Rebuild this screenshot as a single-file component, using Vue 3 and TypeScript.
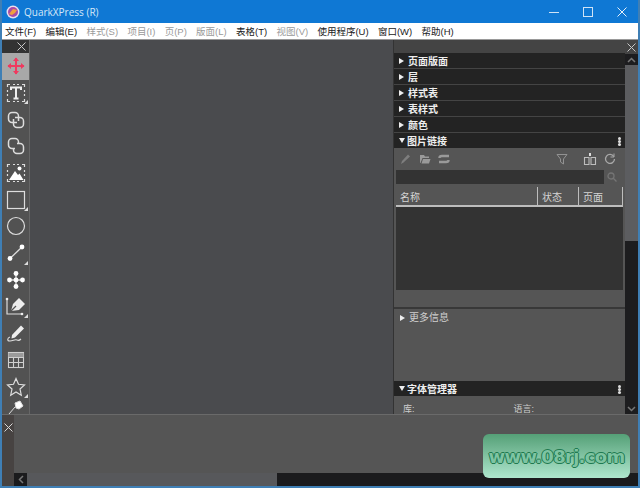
<script setup lang="ts">
const menus = [
  { t: '文件(F)', on: true }, { t: '编辑(E)', on: true }, { t: '样式(S)', on: false }, { t: '项目(I)', on: false },
  { t: '页(P)', on: false }, { t: '版面(L)', on: false }, { t: '表格(T)', on: true }, { t: '视图(V)', on: false },
  { t: '使用程序(U)', on: true }, { t: '窗口(W)', on: true }, { t: '帮助(H)', on: true },
]
const rows = ['页面版面', '层', '样式表', '表样式', '颜色']
</script>

<template>
  <div class="win">
    <header class="title">
      <svg class="logo" width="14" height="14" viewBox="0 0 14 14">
        <circle cx="7" cy="7" r="6.500" fill="#e8e0ee" />
        <circle cx="7" cy="7" r="5" fill="#a84aa8" />
        <path d="M3 9l4-5 4 1-2 3-3 2z" fill="#f0a040" />
      </svg>
      <span class="title-text">QuarkXPress (R)</span>
      <div class="caption">
        <svg width="10" height="10" viewBox="0 0 10 10"><path d="M0 5.500h10" stroke="#cfe3f6" /></svg>
        <svg width="10" height="10" viewBox="0 0 10 10"><rect x=".5" y=".5" width="9" height="9" fill="none" stroke="#cfe3f6" /></svg>
        <svg width="10" height="10" viewBox="0 0 10 10"><path d="M.5.5l9 9M9.500.5l-9 9" stroke="#e4f0fa" /></svg>
      </div>
    </header>
    <nav class="menu">
      <span v-for="m in menus" :key="m.t" :class="{ off: !m.on }">{{ m.t }}</span>
    </nav>

    <div class="main">
      <aside class="tools">
        <div class="tools-head">
          <svg width="9" height="9" viewBox="0 0 9 9"><path d="M.5.5l8 8M8.500.5l-8 8" stroke="#c8c8c8" /></svg>
        </div>
        <div class="tool active">
          <svg width="20" height="20" viewBox="0 0 20 20" fill="none" stroke="#f0395f" stroke-width="2">
            <path d="M10 2v16M2 10h16" />
            <path d="M7 5l3-3.500L13 5zM7 15l3 3.500 3-3.500zM5 7l-3.500 3L5 13zM15 7l3.500 3-3.500 3z" fill="#f0395f" stroke="none" />
          </svg>
        </div>
        <div class="tool">
          <svg width="20" height="20" viewBox="0 0 20 20" fill="none" stroke="#ddd" stroke-width="1.200">
            <path d="M1.500 4V1.500H4M7 1.500h2M11 1.500h2M16 1.500h2.500V4M18.500 7v2M18.500 11v2M18.500 16v2.500H16M13 18.500h-2M9 18.500H7M4 18.500H1.500V16M1.500 13v-2M1.500 9V7" />
            <path d="M5 7V4.500h10V7M10 4.500v11M7.500 15.500h5" stroke="#eee" stroke-width="2" />
          </svg>
          <i class="corner" />
        </div>
        <div class="tool">
          <svg width="20" height="20" viewBox="0 0 20 20" fill="none" stroke="#ddd" stroke-width="1.500">
            <path d="M11 12.500H6A3.500 3.500 0 0 1 2.500 9V6A3.500 3.500 0 0 1 6 2.500h3A3.500 3.500 0 0 1 12.500 6v5" />
            <path d="M9 7.500h5A3.500 3.500 0 0 1 17.500 11v3a3.500 3.500 0 0 1-3.500 3.500h-3A3.500 3.500 0 0 1 7.500 14V9" />
          </svg>
        </div>
        <div class="tool">
          <svg width="20" height="20" viewBox="0 0 20 20" fill="none" stroke="#ddd" stroke-width="1.500">
            <path d="M9 12.500H6A3.500 3.500 0 0 1 2.500 9V6A3.500 3.500 0 0 1 6 2.500h3A3.500 3.500 0 0 1 12.500 6v1" />
            <path d="M11 7.500h3A3.500 3.500 0 0 1 17.500 11v3a3.500 3.500 0 0 1-3.500 3.500h-3A3.500 3.500 0 0 1 7.500 14v-1" />
          </svg>
        </div>
        <div class="tool">
          <svg width="20" height="20" viewBox="0 0 20 20" fill="none" stroke="#ddd" stroke-width="1.200">
            <path d="M1.500 4V1.500H4M7 1.500h2M11 1.500h2M16 1.500h2.500V4M18.500 7v2M18.500 11v2M18.500 16v2.500H16M13 18.500h-2M9 18.500H7M4 18.500H1.500V16M1.500 13v-2M1.500 9V7" />
            <circle cx="13.500" cy="5.500" r="2" fill="#fff" stroke="none" />
            <path d="M3 17l6-9 3 4 1.500-1.500L17.500 17z" fill="#fff" stroke="none" />
          </svg>
        </div>
        <div class="tool">
          <svg width="20" height="20" viewBox="0 0 20 20"><rect x="1.500" y="1.500" width="17" height="17" fill="none" stroke="#ddd" stroke-width="1.200" /></svg>
          <i class="corner" />
        </div>
        <div class="tool">
          <svg width="20" height="20" viewBox="0 0 20 20"><circle cx="10" cy="10" r="8.500" fill="none" stroke="#ddd" stroke-width="1.200" /></svg>
        </div>
        <div class="tool">
          <svg width="20" height="20" viewBox="0 0 20 20">
            <path d="M4 15.500L16 4" stroke="#ddd" stroke-width="1.300" />
            <circle cx="4" cy="15.500" r="2.400" fill="#fff" /><circle cx="16" cy="4" r="2.400" fill="#fff" />
          </svg>
          <i class="corner" />
        </div>
        <div class="tool">
          <svg width="20" height="20" viewBox="0 0 20 20" fill="#fff">
            <path d="M3 10h14M10 3v14" stroke="#ddd" stroke-width="1.300" />
            <circle cx="10" cy="3.500" r="2.400" /><circle cx="10" cy="16.500" r="2.400" />
            <circle cx="3.500" cy="10" r="2.400" /><circle cx="16.500" cy="10" r="2.400" /><circle cx="10" cy="10" r="2.400" />
          </svg>
        </div>
        <div class="tool">
          <svg width="22" height="22" viewBox="0 0 22 22" fill="none" stroke="#ddd" stroke-width="1.200">
            <path d="M2 3v15h15" />
            <circle cx="2" cy="3" r="1.300" fill="#eee" stroke="none" /><circle cx="17" cy="18" r="1.300" fill="#eee" stroke="none" />
            <path d="M6 15l2-7 6-6 6 6-6 6z" fill="#eee" stroke="none" />
            <path d="M6 15l5-5" stroke="#555" />
          </svg>
          <i class="corner" />
        </div>
        <div class="tool">
          <svg width="20" height="20" viewBox="0 0 20 20" fill="none" stroke="#ddd" stroke-width="1.100">
            <path d="M6 12L15 2.500l3 3L9 14.500l-3.500 1z" fill="#eee" stroke="none" />
            <path d="M4 14c-3 1-3 4 0 4s5-2 7-1 3 0 4-1" />
          </svg>
        </div>
        <div class="tool">
          <svg width="20" height="20" viewBox="0 0 20 20" fill="none" stroke="#cfcfcf" stroke-width="1.100">
            <rect x="2.500" y="2.500" width="15" height="15" />
            <path d="M2.500 3h15v4h-15z" fill="#9a9a9a" stroke="none" />
            <path d="M2.500 7.500h15M2.500 12.500h15M7.500 7.500v10M12.500 7.500v10" />
          </svg>
        </div>
        <div class="tool">
          <svg width="20" height="20" viewBox="0 0 20 20"><path d="M10 1.500l2.500 5.800 6 .6-4.500 4.100 1.300 6.200L10 15l-5.300 3.200L6 12 1.500 7.900l6-.6z" fill="none" stroke="#ddd" stroke-width="1.200" /></svg>
          <i class="corner" />
        </div>
        <div class="tool clip">
          <svg width="20" height="20" viewBox="0 0 20 20" fill="#fff">
            <path d="M9 3l5-2 3 5-4 3-3-1zM9 7L3 14" stroke="#ddd" />
          </svg>
        </div>
      </aside>

      <div class="canvas" />

      <section class="panel">
        <div class="panel-inner">
          <div class="panel-head" />
          <div v-for="r in rows" :key="r" class="row"><i class="tri" />{{ r }}</div>
          <div class="row open"><i class="tri down" />图片链接<b class="dots" /></div>

          <div class="links">
            <div class="icons">
              <svg width="12" height="12" viewBox="0 0 12 12"><path d="M1 11l1-3 6-6.500 2 2-6.500 6z" fill="#7e7e7e" /></svg>
              <svg width="12" height="12" viewBox="0 0 12 12"><path d="M1 2h4l1 1.500h4V5H3.500L1.500 10H1zM4 6h7.500L10 10.500H2.500z" fill="#9a9a9a" /></svg>
              <svg width="12" height="12" viewBox="0 0 12 12" fill="none" stroke="#9a9a9a" stroke-width="2.400"><path d="M11 3H4Q1.500 3 1.500 5M1 9h7Q10.500 9 10.500 7" /></svg>
              <span class="spacer" />
              <svg width="12" height="12" viewBox="0 0 12 12" fill="none" stroke="#929292"><path d="M1 1.500h10L7.500 6v5l-3-2V6z" /></svg>
              <svg class="gap" width="14" height="12" viewBox="0 0 14 12" fill="none" stroke="#bdbdbd" stroke-width="1.100"><path d="M1.500 4.500h4.500v7H1.500zM8 4.500h4.500v7H8z" /><path d="M7 0v3" stroke="#ddd" stroke-width="2" /></svg>
              <svg width="12" height="12" viewBox="0 0 12 12" fill="none" stroke="#a8a8a8" stroke-width="1.300"><path d="M9.800 3.500A4.500 4.500 0 1 0 10.500 6" /><path d="M10 .5v3.500H6.500" stroke-width="1" /></svg>
            </div>
            <div class="search">
              <div class="search-box" />
              <svg width="10" height="10" viewBox="0 0 10 10" fill="none" stroke="#757575" stroke-width="1.300"><circle cx="4" cy="4" r="3" /><path d="M6.300 6.300L9.500 9.500" /></svg>
            </div>
            <div class="thead">
              <span class="c1">名称</span><span class="c2">状态</span><span class="c3">页面</span>
            </div>
            <div class="tbody" />
            <div class="tfoot" />
            <div class="more"><i class="tri" />更多信息</div>
          </div>
          <div class="row open"><i class="tri down" />字体管理器<b class="dots" /></div>
          <div class="fonts"><span>库:</span><span>语言:</span></div>
        </div>
        <div class="vscroll">
          <div class="vhead">
            <svg width="9" height="9" viewBox="0 0 9 9"><path d="M.5.5l8 8M8.500.5l-8 8" stroke="#c8c8c8" /></svg>
          </div>
          <div class="arrow"><svg width="9" height="6" viewBox="0 0 9 6"><path d="M1 5l3.500-3.500L8 5" fill="none" stroke="#777" stroke-width="1.500" /></svg></div>
          <div class="thumb" />
          <div class="track" />
          <div class="arrow"><svg width="9" height="6" viewBox="0 0 9 6"><path d="M1 1l3.500 3.500L8 1" fill="none" stroke="#777" stroke-width="1.500" /></svg></div>
        </div>
      </section>
    </div>

    <footer class="bottom">
      <div class="bottom-side">
        <svg width="9" height="9" viewBox="0 0 9 9"><path d="M.5.5l8 8M8.500.5l-8 8" stroke="#d8d8d8" /></svg>
      </div>
      <div class="bottom-main">
        <div class="bottom-area" />
        <div class="hscroll">
          <div class="harrow"><svg width="6" height="9" viewBox="0 0 6 9"><path d="M5 1L1.500 4.500 5 8" fill="none" stroke="#777" stroke-width="1.500" /></svg></div>
          <div class="hthumb" />
        </div>
      </div>
    </footer>

    <div class="mark">www.08rj.com</div>
  </div>
</template>

<style>
html, body { margin: 0; background: #0f78d4; }
</style>

<style scoped>
.win {
  width: 640px; height: 488px; box-sizing: border-box; overflow: hidden; position: relative;
  border: 2px solid #3f7fb5; border-top: 0; display: flex; flex-direction: column;
  background: #4a4b4e; font-family: "Liberation Sans", "Noto Sans CJK SC", sans-serif;
}
.title {
  height: 23px; flex: none; margin: 0 -2px; background: #0f78d4; display: flex; align-items: center; padding-left: 6px;
}
.logo { margin-right: 4px; }
.title-text { color: #d5e7f7; font: 10px "Open Sans", "Liberation Sans", sans-serif; }
.caption { margin-left: auto; display: flex; gap: 24px; padding-right: 13px; }
.menu {
  height: 16px; flex: none; background: #fff; display: flex; align-items: center; gap: 9.300px;
  padding-left: 3px; font-size: 9.500px; color: #222; border-bottom: 1px solid #999; box-sizing: content-box;
}
.menu .off { color: #9a9a9a; }
.main { flex: 1; min-height: 0; display: flex; }
.tools { width: 27px; flex: none; background: #525252; border-right: 1px solid #666; overflow: hidden; }
.tools-head { height: 13px; background: #333; display: flex; justify-content: flex-end; align-items: center; padding-right: 3px; }
.tool { height: 26.700px; position: relative; display: flex; align-items: center; justify-content: center; }
.tool.active { background: #a8a8a8; }
.tool.clip { align-items: flex-start; }
.corner {
  position: absolute; right: 1px; bottom: 2px; width: 0; height: 0;
  border-left: 4px solid transparent; border-bottom: 4px solid #ddd;
}
.canvas { flex: 1; background: #4a4b4e; }
.panel { width: 244px; flex: none; display: flex; border-left: 1px solid #333; overflow: hidden; }
.panel-inner { width: 231px; flex: none; background: #555; overflow: hidden; }
.panel-head { height: 13px; background: #444; }
.vhead { height: 14px; flex: none; background: #444; display: flex; align-items: center; justify-content: center; }
.row {
  height: 15px; background: #232323; border-bottom: 1px solid #444; display: flex; align-items: center;
  padding-left: 5px; font: 700 10px "Noto Sans CJK SC", sans-serif; color: #eee; position: relative;
}
.row.open { border-bottom: 0; }
.tri {
  width: 0; height: 0; margin-right: 4px; border-left: 5px solid #eee;
  border-top: 3px solid transparent; border-bottom: 3px solid transparent;
}
.tri.down {
  margin-right: 2px; border-top: 5px solid #eee; border-bottom: 0;
  border-left: 3px solid transparent; border-right: 3px solid transparent;
}
.dots {
  position: absolute; right: 4px; top: 4px; width: 3px; height: 3px; border-radius: 50%;
  background: #ddd; box-shadow: 0 3px #ddd, 0 6px #ddd;
}
.links { height: 233px; background: #555; display: flex; flex-direction: column; }
.icons { height: 21px; display: flex; align-items: center; gap: 7px; padding: 0 9px 0 6px; flex: none; }
.spacer { flex: 1; }
.gap { margin-left: 8px; }
.search { height: 14px; margin-top: 1px; display: flex; align-items: center; gap: 3px; padding-left: 2px; flex: none; }
.search-box { width: 208px; height: 14px; background: #333; }
.thead {
  height: 18px; margin: 3px 2px 0; display: flex; align-items: center; flex: none; color: #d4d4d4; font-size: 10px;
  border-bottom: 2px solid #bdbdbd; box-sizing: content-box;
}
.thead span { box-sizing: border-box; height: 100%; display: flex; align-items: center; padding-left: 4px; border-right: 1px solid #bdbdbd; }
.c1 { width: 142px; }
.c2 { width: 41px; }
.c3 { width: 44px; }
.tbody { height: 83px; margin: 0 2px; background: #333; flex: none; }
.tfoot { height: 17px; flex: none; border-bottom: 2px solid #383838; }
.more { padding: 3px 0 0 6px; display: flex; align-items: center; color: #cfcfcf; font-size: 10px; line-height: 12px; }
.fonts { display: flex; padding: 6px 0 0 9px; gap: 99px; color: #ccc; font-size: 9px; }
.fonts span { flex: none; }
.vscroll { width: 13px; flex: none; background: #1d1d1f; display: flex; flex-direction: column; }
.arrow { height: 11px; flex: none; display: flex; align-items: center; justify-content: center; }
.thumb { height: 176px; flex: none; background: #5c5d60; }
.track { flex: 1; }
.bottom { height: 72px; flex: none; display: flex; border-top: 1px solid #6a6a6a; box-sizing: border-box; }
.bottom-side { width: 12px; flex: none; background: #474342; padding: 3px 0 0 2px; box-sizing: border-box; }
.bottom-main { flex: 1; display: flex; flex-direction: column; }
.bottom-area { flex: 1; background: #555; }
.hscroll { height: 13px; flex: none; background: #1b1b1d; display: flex; }
.harrow { width: 13px; display: flex; align-items: center; justify-content: center; }
.hthumb { width: 250px; background: #57585b; }
.mark {
  position: absolute; left: 481px; top: 434px; width: 147px; height: 44px; border-radius: 6px;
  background: linear-gradient(#55a077, #aee6cd); display: flex; align-items: center; justify-content: center;
  color: #7ec4a2; font: 700 18px "DejaVu Sans", sans-serif; letter-spacing: -.7px;
  text-shadow: 1px 0 #1f7a50, -1px 0 #1f7a50, 0 1px #1f7a50, 0 -1px #1f7a50;
}
</style>
